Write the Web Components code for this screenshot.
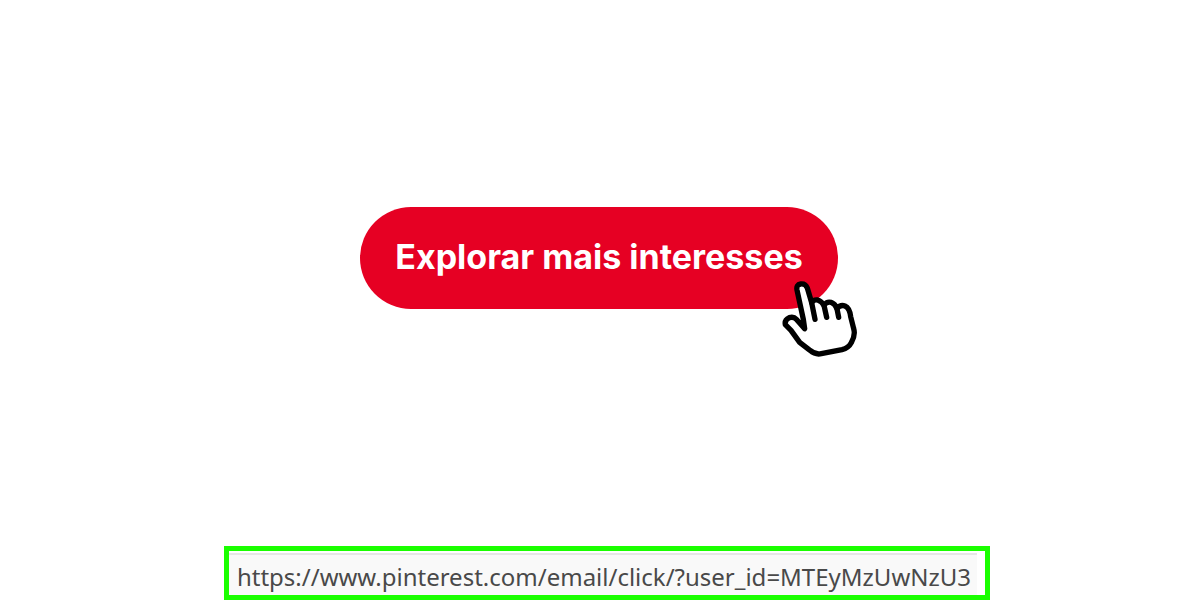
<!DOCTYPE html>
<html lang="pt-BR">
<head>
<meta charset="utf-8">
<meta name="viewport" content="width=device-width, initial-scale=1">
<title>Explorar mais interesses</title>
<style>
body { margin: 0; background: #fff; }
</style>
</head>
<body>
<link-preview>
  <pill-button>Explorar mais interesses</pill-button>
  <status-url slot="status" href="https://www.pinterest.com/email/click/?user_id=MTEyMzUwNzU3"></status-url>
</link-preview>
<script>
class LinkPreview extends HTMLElement {
  constructor() {
    super();
    this.attachShadow({ mode: "open" }).innerHTML = `
      <style>
        :host { display: grid; grid-template-rows: 1fr auto; min-height: 100vh; }
        main { display: grid; place-items: center; padding: 0 2px 30px 0; }
        footer { display: flex; justify-content: center; padding-left: 14px; }
      </style>
      <main><slot></slot></main>
      <footer><slot name="status"></slot></footer>`;
  }
}

class PillButton extends HTMLElement {
  constructor() {
    super();
    this.attachShadow({ mode: "open" }).innerHTML = `
      <style>
        :host { display: block; position: relative; }
        button {
          display: block; border: 0; margin: 0; padding: 29px 35px 31px;
          border-radius: 51px; background: #e60023; color: #fff; cursor: pointer;
          font: 700 34px/42px Inter, "Liberation Sans", sans-serif; white-space: nowrap;
        }
        hand-cursor { position: absolute; right: -19px; bottom: -48px; }
      </style>
      <button type="button"><slot></slot></button>
      <hand-cursor></hand-cursor>`;
  }
}

class HandCursor extends HTMLElement {
  constructor() {
    super();
    this.attachShadow({ mode: "open" }).innerHTML = `
      <style>
        :host { display: block; pointer-events: none; }
        svg { display: block; }
      </style>
      <svg width="76" height="77" viewBox="0 0 228 231" aria-hidden="true" fill="#fff" stroke="#000" stroke-width="16" stroke-linecap="round" stroke-linejoin="round">
        <path d="M71 146 L67 118 L48 30 Q45 14 59 12 Q73 10 79 24 L92 68 Q98 58 110 60 Q122 64 129 76 Q137 64 150 67 Q162 71 168 86 Q178 73 192 78 Q206 84 209 110 L218 146 Q224 165 211 188 Q203 204 183 209 L121 221 Q103 225 87 211 L56 187 L30 151 L13 134 Q10 120 25 113 Q38 109 46 118 Z"/>
        <path d="M92 68 L102 118 M129 76 L137 112 M168 86 L173 112" fill="none"/>
      </svg>`;
  }
}

class StatusUrl extends HTMLElement {
  constructor() {
    super();
    this.attachShadow({ mode: "open" }).innerHTML = `
      <style>
        :host { display: block; border: 5px solid #1aff00; padding: 2px 8px 0 0; background: #fff; }
        a {
          display: block; box-sizing: border-box; border-top: 2px solid #e6e6e6;
          padding: 4px 6px 0 8px; background: #f9f9f9; color: #494949;
          font: 400 24px/36px "Noto Sans", "Open Sans", sans-serif;
          text-decoration: none; white-space: nowrap;
        }
      </style>
      <a></a>`;
  }
  connectedCallback() {
    const link = this.shadowRoot.querySelector("a");
    link.href = link.textContent = this.getAttribute("href");
  }
}

customElements.define("hand-cursor", HandCursor);
customElements.define("pill-button", PillButton);
customElements.define("status-url", StatusUrl);
customElements.define("link-preview", LinkPreview);
</script>
</body>
</html>
